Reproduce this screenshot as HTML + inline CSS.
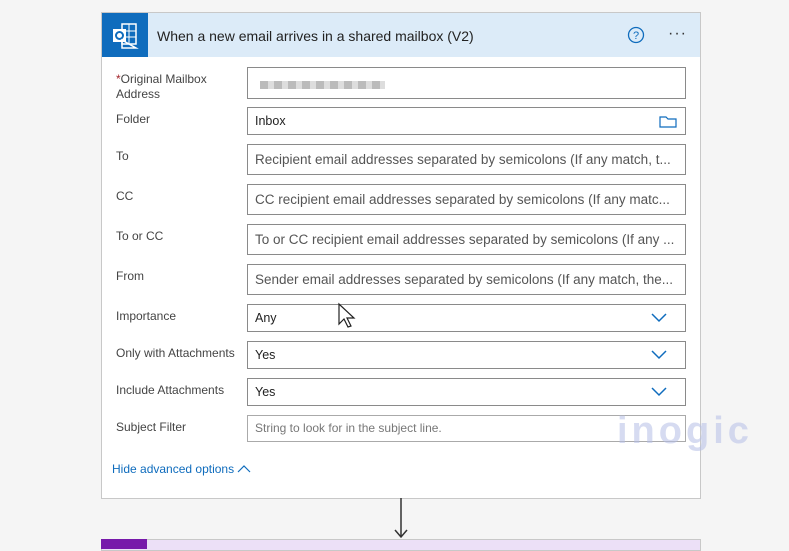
<!DOCTYPE html><html><head><style>
body{margin:0;width:789px;height:544px;background:#f5f5f5;font-family:"Liberation Sans",sans-serif;position:relative;overflow:hidden}
.card{position:absolute;left:101px;top:12px;width:598px;height:485px;background:#fff;border:1px solid #c8c8c8}
.hdr{position:absolute;left:0;top:0;width:598px;height:44px;background:#dcebf8}
.ico{position:absolute;left:0;top:0;width:46px;height:44px;background:#0f6cbd}
.t{position:absolute;left:55px;top:15px;font-size:14px;color:#222}
.lbl{position:absolute;left:14px;font-size:12px;color:#444;line-height:15px}
.in{position:absolute;left:145px;width:439px;border:1px solid #8a8a8a;font-size:13.5px;color:#555;box-sizing:border-box;padding-left:7px;white-space:nowrap;overflow:hidden}
.chev{position:absolute;right:18px;top:8px}
</style></head><body>
<div class="card">
<div class="hdr"><div class="ico"><svg width="46" height="44"><rect x="20" y="11" width="14" height="20" fill="none" stroke="#fff" stroke-width="1.5"/><line x1="20" y1="18" x2="34" y2="18" stroke="#fff"/><line x1="20" y1="24" x2="34" y2="24" stroke="#fff"/><line x1="27" y1="11" x2="27" y2="31" stroke="#fff"/><rect x="11" y="16" width="13" height="13" fill="#fff"/><circle cx="17.5" cy="22.5" r="3.5" fill="none" stroke="#0f6cbd" stroke-width="2"/><path d="M20 27 L34 35 L20 35Z" fill="none" stroke="#fff" stroke-width="1.5"/></svg></div>
<div class="t">When a new email arrives in a shared mailbox (V2)</div>
<svg style="position:absolute;left:525px;top:13px" width="18" height="18"><circle cx="9" cy="9" r="7.5" fill="none" stroke="#0f6cbd" stroke-width="1.3"/><text x="9" y="13" font-size="11" text-anchor="middle" fill="#0f6cbd" font-family="Liberation Sans">?</text></svg>
<div style="position:absolute;left:566px;top:12px;font-size:16px;color:#333;letter-spacing:1px">···</div>
</div>
<div class="lbl" style="top:59px"><span style="color:#a4262c">*</span>Original Mailbox<br>Address</div>
<div class="in" style="top:54px;height:32px"><div style="position:absolute;left:12px;top:13px;width:125px;height:8px;background:repeating-linear-gradient(90deg,#bbb 0 8px,#ddd 8px 14px)"></div></div>
<div class="lbl" style="top:99px">Folder</div>
<div class="in" style="top:94px;height:28px;line-height:26px;color:#222;font-size:12.5px">Inbox<svg style="position:absolute;right:8px;top:7px" width="18" height="13"><path d="M1 2h6l2 2h8v8H1z" fill="none" stroke="#0f6cbd" stroke-width="1.2"/></svg></div>
<div class="lbl" style="top:136px">To</div>
<div class="in" style="top:131px;height:31px;line-height:29px">Recipient email addresses separated by semicolons (If any match, t...</div>
<div class="lbl" style="top:176px">CC</div>
<div class="in" style="top:171px;height:31px;line-height:29px">CC recipient email addresses separated by semicolons (If any matc...</div>
<div class="lbl" style="top:216px">To or CC</div>
<div class="in" style="top:211px;height:31px;line-height:29px">To or CC recipient email addresses separated by semicolons (If any ...</div>
<div class="lbl" style="top:256px">From</div>
<div class="in" style="top:251px;height:31px;line-height:29px">Sender email addresses separated by semicolons (If any match, the...</div>
<div class="lbl" style="top:296px">Importance</div>
<div class="in" style="top:291px;height:28px;line-height:26px;color:#222;font-size:12.5px">Any<svg class="chev" width="16" height="10"><path d="M1 1l7 7 7-7" fill="none" stroke="#0f6cbd" stroke-width="1.5"/></svg></div>
<div class="lbl" style="top:333px">Only with Attachments</div>
<div class="in" style="top:328px;height:28px;line-height:26px;color:#222;font-size:12.5px">Yes<svg class="chev" width="16" height="10"><path d="M1 1l7 7 7-7" fill="none" stroke="#0f6cbd" stroke-width="1.5"/></svg></div>
<div class="lbl" style="top:370px">Include Attachments</div>
<div class="in" style="top:365px;height:28px;line-height:26px;color:#222;font-size:12.5px">Yes<svg class="chev" width="16" height="10"><path d="M1 1l7 7 7-7" fill="none" stroke="#0f6cbd" stroke-width="1.5"/></svg></div>
<div class="lbl" style="top:407px">Subject Filter</div>
<div class="in" style="top:402px;height:27px;line-height:25px;font-size:12px;color:#777;border-color:#aaa">String to look for in the subject line.</div>
<div style="position:absolute;left:10px;top:449px;font-size:12px;color:#0f6cbd">Hide advanced options <svg width="14" height="9"><path d="M1 8l6-6 6 6" fill="none" stroke="#0f6cbd" stroke-width="1.2"/></svg></div>
</div>
<svg style="position:absolute;left:335px;top:302px" width="22" height="28"><path d="M4 2v20l5-5 4 8 3-1-4-8h7z" fill="#fff" stroke="#222" stroke-width="1.2"/></svg>
<div style="position:absolute;left:617px;top:410px;font-size:38px;font-weight:bold;color:rgba(180,190,230,.55);letter-spacing:4px">inogic</div>
<svg style="position:absolute;left:393px;top:498px" width="16" height="42"><path d="M8 0v39M2 32l6 7 6-7" fill="none" stroke="#333" stroke-width="1.5"/></svg>
<div style="position:absolute;left:101px;top:539px;width:598px;height:10px;background:#ece0f7;border:1px solid #c8c8c8"></div>
<div style="position:absolute;left:101px;top:539px;width:46px;height:10px;background:#7719aa"></div>
</body></html>
